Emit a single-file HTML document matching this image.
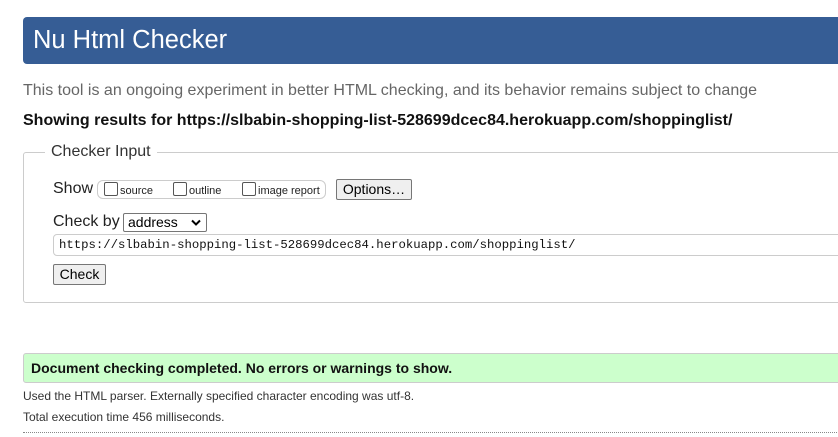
<!DOCTYPE html>
<html><head><style>
body{margin:0;width:838px;height:437px;overflow:hidden;background:#fff;font-family:"Liberation Sans",Arial,sans-serif;position:relative}
.a{position:absolute;white-space:nowrap}
.hdr{left:23px;top:17px;width:830px;height:47px;background:#365d95;border-radius:4px}
.fs{left:23px;top:152px;width:830px;height:149px;border:1px solid #ccc;border-radius:3px}
.cb{display:inline-block;width:12px;height:12px;border:1px solid #555;border-radius:2px;vertical-align:-2px;margin-right:2px;background:#fff}
.btn{background:#efefef;border:1px solid #767676;border-radius:2px;font-size:14px;color:#000}
</style></head><body>
<div class="a hdr"></div>
<div class="a" style="left:33px;top:26px;font-size:25.5px;color:#fff">Nu Html Checker</div>
<div class="a" style="left:23px;top:82px;font-size:16px;color:#666">This tool is an ongoing experiment in better HTML checking, and its behavior remains subject to change</div>
<div class="a" style="left:23px;top:112px;font-size:16px;font-weight:bold;color:#111">Showing results for https://slbabin-shopping-list-528699dcec84.herokuapp.com/shoppinglist/</div>
<div class="a fs"></div>
<div class="a" style="left:45px;top:143px;background:#fff;padding:0 6px;font-size:16px;color:#333">Checker Input</div>
<div class="a" style="left:53px;top:180px;font-size:16px;color:#222">Show</div>
<div class="a" style="left:97px;top:180px;width:227px;height:17px;border:1px solid #ccc;border-radius:6px"></div>
<div class="a" style="left:104px;top:182px;font-size:11px;color:#222"><span class="cb"></span>source</div>
<div class="a" style="left:173px;top:182px;font-size:11px;color:#222"><span class="cb"></span>outline</div>
<div class="a" style="left:242px;top:182px;font-size:11px;color:#222"><span class="cb"></span>image report</div>
<div class="a btn" style="left:336px;top:179px;width:74px;height:19px;line-height:19px;text-align:center">Options…</div>
<div class="a" style="left:53px;top:213px;font-size:16px;color:#222">Check by</div>
<div class="a" style="left:123px;top:213px;border:1px solid #767676;border-radius:2px;font-size:14px;line-height:17px;padding-left:4px;box-sizing:border-box;width:84px;height:19px">address<svg style="position:absolute;right:5px;top:5px" width="10" height="7" viewBox="0 0 10 7"><path d="M1 1.5L5 5.5L9 1.5" fill="none" stroke="#000" stroke-width="2"/></svg></div>
<div class="a" style="left:53px;top:234px;width:800px;height:22px;border:1px solid #ccc;border-radius:4px;box-sizing:border-box;font-family:'Liberation Mono',monospace;font-size:12.3px;line-height:20px;padding-left:5px;color:#111">https://slbabin-shopping-list-528699dcec84.herokuapp.com/shoppinglist/</div>
<div class="a btn" style="left:53px;top:264px;width:51px;height:19px;line-height:19px;text-align:center">Check</div>
<div class="a" style="left:23px;top:353px;width:830px;height:28px;background:#ccffcc;border:1px solid #ccc;border-radius:3px"></div>
<div class="a" style="left:31px;top:360px;font-size:14px;font-weight:bold;color:#111">Document checking completed. No errors or warnings to show.</div>
<div class="a" style="left:23px;top:389px;font-size:12px;color:#333">Used the HTML parser. Externally specified character encoding was utf-8.</div>
<div class="a" style="left:23px;top:410px;font-size:12px;color:#333">Total execution time 456 milliseconds.</div>
<div class="a" style="left:23px;top:432px;width:830px;border-top:1px dotted #888"></div>
</body></html>
